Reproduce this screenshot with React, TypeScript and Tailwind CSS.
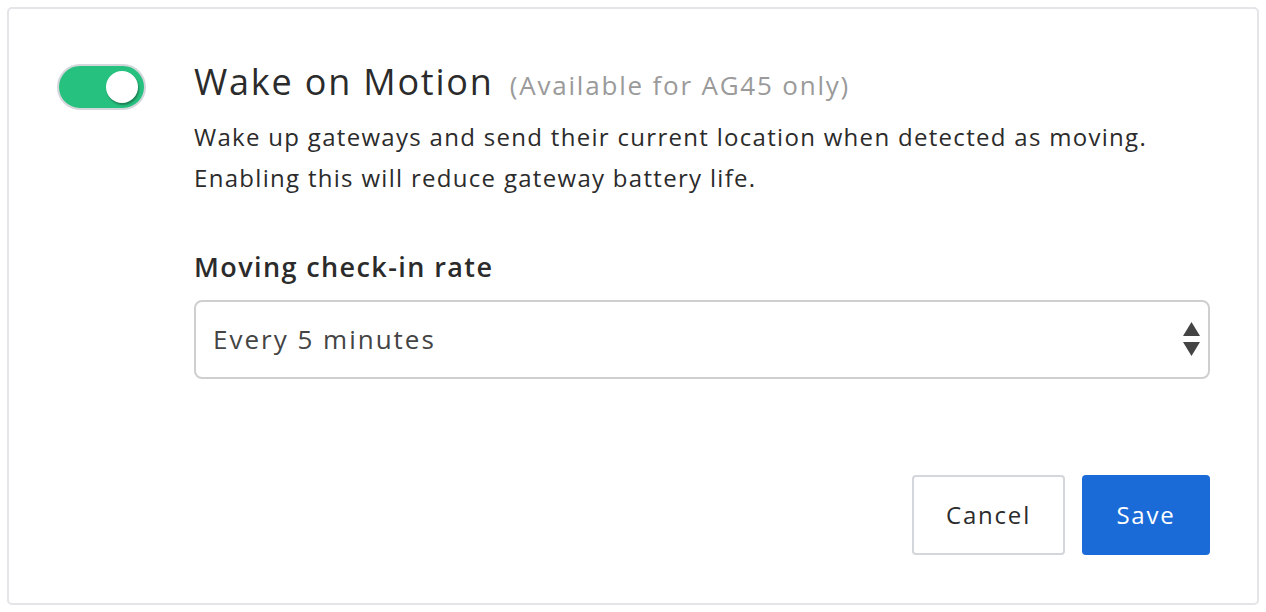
import { useState } from "react";

export default function App() {
  const [enabled, setEnabled] = useState(true);
  const [rate, setRate] = useState("5");

  return (
    <div className="min-h-screen bg-white p-[7px]" style={{ fontFamily: '"Open Sans", sans-serif' }}>
      <div className="flex h-[598px] rounded-[5px] border-2 border-[#e3e5e8] pl-[48px] pr-[47px] pt-[55px]">
        {/* toggle */}
        <button
          type="button"
          onClick={() => setEnabled(!enabled)}
          className={`relative h-[46px] w-[89px] shrink-0 rounded-full border-2 border-[#d3d6da] ${enabled ? "bg-[#27c17f]" : "bg-[#e5e7ea]"}`}
        >
          <span
            className={`absolute top-[5px] h-[32px] w-[32px] rounded-full bg-white shadow-[1px_2px_2px_rgba(0,0,0,0.35)] ${enabled ? "left-[47px]" : "left-[5px]"}`}
          />
        </button>

        <div className="-mt-[7px] ml-[48px] flex flex-1 flex-col">
          <div className="flex items-baseline">
            <h1 className="text-[36px] leading-[50px] tracking-[1.8px] text-[#2b2b2b]">Wake on Motion</h1>
            <span className="ml-[16px] text-[26px] tracking-[1.8px] text-[#9a9a9a]">(Available for AG45 only)</span>
          </div>
          <p className="mt-[9px] text-[24px] leading-[41px] tracking-[1.3px] text-[#2b2b2b]">
            Wake up gateways and send their current location when detected as moving.
            <br />
            Enabling this will reduce gateway battery life.
          </p>

          <label className="mt-[51px] text-[27px] font-semibold leading-[36px] tracking-[1.4px] text-[#2b2b2b]">
            Moving check-in rate
          </label>
          <div className="relative mt-[15px]">
            <select
              value={rate}
              onChange={(e) => setRate(e.target.value)}
              className="h-[79px] w-full appearance-none rounded-[8px] border-2 border-[#cfcfcf] bg-white pl-[17px] text-[26px] tracking-[2px] text-[#444] outline-none"
            >
              <option value="1">Every 1 minute</option>
              <option value="5">Every 5 minutes</option>
              <option value="15">Every 15 minutes</option>
            </select>
            <svg className="pointer-events-none absolute right-[10px] top-[22px]" width="17" height="34" viewBox="0 0 17 34">
              <path d="M8.5 0 L17 14 L0 14 Z" fill="#444" />
              <path d="M0 20 L17 20 L8.5 34 Z" fill="#444" />
            </svg>
          </div>

          <div className="mt-[96px] flex justify-end gap-[17px]">
            <button
              type="button"
              className="h-[80px] w-[153px] rounded-[4px] border-2 border-[#d3d6da] bg-white text-[24px] tracking-[1.8px] text-[#2b2b2b]"
            >
              Cancel
            </button>
            <button
              type="button"
              className="h-[80px] w-[128px] rounded-[4px] bg-[#1a6bd8] text-[24px] tracking-[1.8px] text-white"
            >
              Save
            </button>
          </div>
        </div>
      </div>
    </div>
  );
}
